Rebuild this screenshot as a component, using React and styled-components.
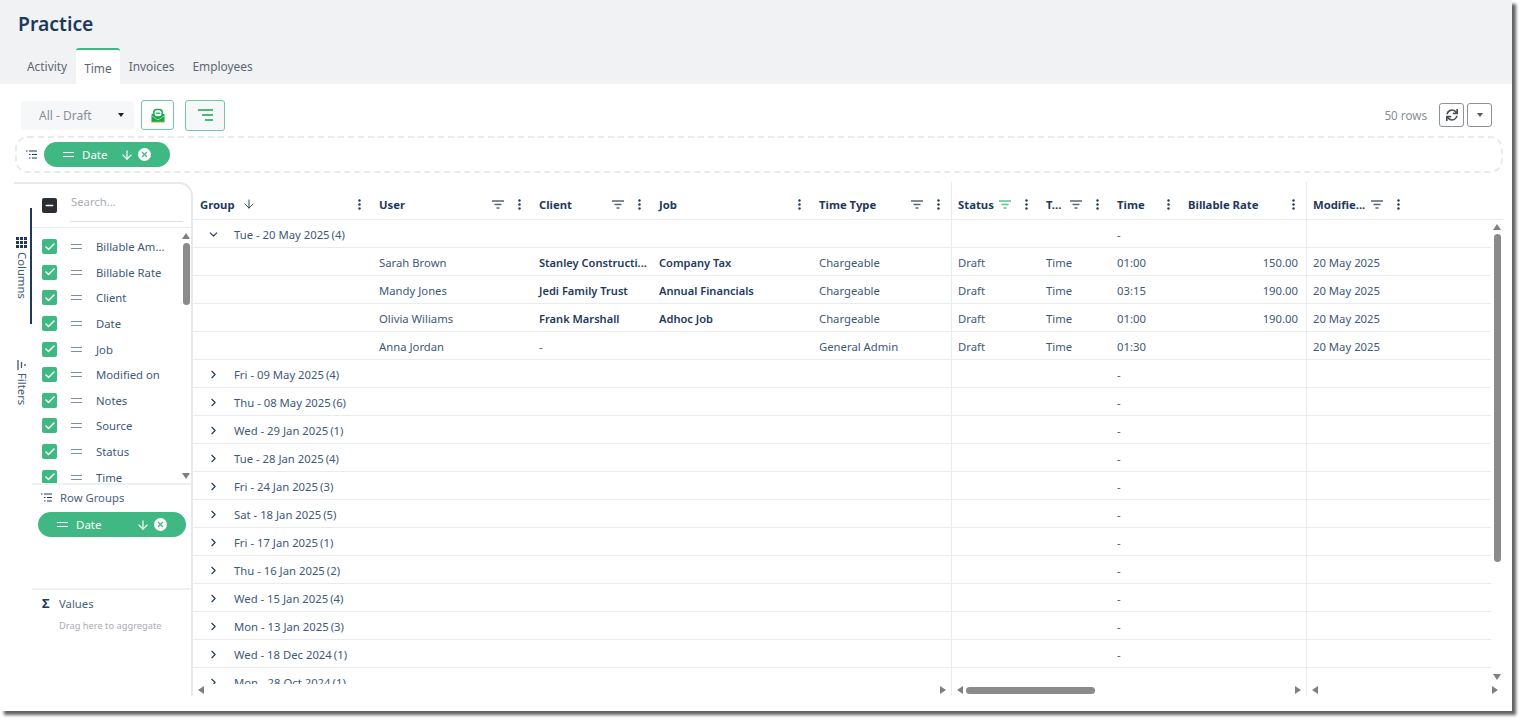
import React from "react";
import styled, { createGlobalStyle } from "styled-components";
import { ArrowDown, Check, ChevronDown, ChevronRight, Minus } from "lucide-react";
import { FaSync } from "react-icons/fa";

const GlobalStyle = createGlobalStyle`
  html, body { margin: 0; padding: 0; background: #fff; overflow: hidden; }
  body { font-family: "Noto Sans", "Open Sans", sans-serif; font-size: 11.3px; color: #35506f; }
  * { box-sizing: border-box; }
`;

const COLS = "179px 160px 120px 160px 139px 88px 71px 71px 125px 105px 80px";
const GREEN = "#40b883";
const NAVY = "#1d3a5c";
const LINE = "#e9ebee";

const Screen = styled.div`
  width: 1524px;
  height: 723px;
`;

const Page = styled.div`
  width: 1512px;
  height: 711px;
  background: #fff;
  display: flex;
  flex-direction: column;
  box-shadow: 4px 4px 3px rgba(70, 70, 70, 0.85);
  overflow: hidden;
`;

const Header = styled.header`
  height: 84px;
  flex: none;
  background: #f1f2f4;
  padding: 11px 18px 0;
  display: flex;
  flex-direction: column;
`;

const Title = styled.h1`
  margin: 0;
  font-size: 19.4px;
  line-height: 26px;
  font-weight: 600;
  color: ${NAVY};
`;

const Tabs = styled.nav`
  display: flex;
  margin-top: 11px;
  height: 36px;
`;

const Tab = styled.div`
  padding: ${(p) => (p.$active ? "8px 8px 0" : "6px 9px 0")};
  font-size: 11.9px;
  line-height: 20px;
  color: #5c6672;
  background: ${(p) => (p.$active ? "#fff" : "transparent")};
  border-top: 2px solid ${(p) => (p.$active ? GREEN : "transparent")};
  border-radius: 3px 3px 0 0;
`;

const Toolbar = styled.div`
  height: 30px;
  flex: none;
  margin: 16px 20px 0 21px;
  display: flex;
  align-items: center;
`;

const Select = styled.div`
  width: 113px;
  height: 29px;
  background: #f6f7f8;
  border-radius: 4px;
  padding: 0 10px 0 18px;
  display: flex;
  align-items: center;
  justify-content: space-between;
  color: #8a8f96;
  font-size: 12px;
`;

const Caret = styled.span`
  width: 0;
  height: 0;
  border-left: 3.5px solid transparent;
  border-right: 3.5px solid transparent;
  border-top: 4px solid ${(p) => p.$color || "#222"};
`;

const IconButton = styled.button`
  width: ${(p) => p.$w}px;
  height: ${(p) => p.$h}px;
  margin-left: ${(p) => p.$ml}px;
  border: 1.5px solid #74c9a2;
  border-radius: 3px;
  background: ${(p) => p.$bg || "#fff"};
  padding: 0;
  display: flex;
  align-items: center;
  justify-content: center;
`;

const RowCount = styled.span`
  margin-left: auto;
  margin-right: 12px;
  color: #8a8f96;
  font-size: 11.7px;
`;

const GreyButton = styled.button`
  width: 25px;
  height: 24px;
  margin-left: ${(p) => p.$ml || 0}px;
  border: 1px solid #8d9298;
  border-radius: 3px;
  background: #fff;
  padding: 0;
  display: flex;
  align-items: center;
  justify-content: center;
  color: #4a4f55;
`;

const DropZone = styled.div`
  height: 37px;
  flex: none;
  margin: 6px 9px 0 15px;
  border: 2px dashed #e8eaed;
  border-radius: 13px;
  display: flex;
  align-items: center;
  padding-left: 9px;
  gap: 7px;
`;

const Chip = styled.div`
  height: 25px;
  width: ${(p) => p.$w}px;
  background: ${GREEN};
  color: #fff;
  border-radius: 13px;
  display: flex;
  align-items: center;
  padding: 0 19px 0 19px;
  font-size: 11.5px;
`;

const ChipLabel = styled.span`
  margin-left: 8px;
  margin-right: auto;
`;

const ChipClose = styled.span`
  width: 13px;
  height: 13px;
  margin-left: 4px;
  border-radius: 50%;
  background: #fff;
  color: ${GREEN};
  display: flex;
  align-items: center;
  justify-content: center;
`;

const Workspace = styled.div`
  display: flex;
  height: 514px;
  margin-top: 9px;
  width: 1503px;
`;

const SideBar = styled.aside`
  width: 179px;
  margin-left: 14px;
  flex: none;
  display: flex;
  border-top: 2px solid #e6e9ed;
  border-right: 2px solid #e6e9ed;
  border-top-right-radius: 14px;
`;

const Rail = styled.div`
  width: 18px;
  flex: none;
  padding-top: 24px;
`;

const RailTab = styled.div`
  height: ${(p) => p.$h}px;
  margin-top: ${(p) => p.$mt || 0}px;
  border-right: 2px solid ${(p) => (p.$active ? NAVY : "transparent")};
  display: flex;
  flex-direction: column;
  align-items: center;
  padding-top: ${(p) => p.$pt}px;
  padding-right: 1px;
  gap: ${(p) => p.$gap}px;
  color: #3d5876;
`;

const RailLabel = styled.span`
  writing-mode: vertical-rl;
  font-size: 11.3px;
  line-height: 14px;
`;

const Panel = styled.div`
  flex: 1;
  min-width: 0;
  display: flex;
  flex-direction: column;
`;

const PanelTop = styled.div`
  height: 44px;
  flex: none;
  border-bottom: 1px solid ${LINE};
  display: flex;
  align-items: flex-start;
  padding: 14px 8px 0 10px;
`;

const MixedBox = styled.span`
  width: 15px;
  height: 15px;
  flex: none;
  border-radius: 2px;
  background: #2b2f33;
  color: #fff;
  display: flex;
  align-items: center;
  justify-content: center;
`;

const Search = styled.div`
  margin-left: 13px;
  margin-top: -7px;
  flex: 1;
  height: 31px;
  line-height: 22px;
  padding-left: 1px;
  border-bottom: 1px solid #dfe2e6;
  color: #a9adb3;
  font-size: 11.3px;
`;

const ColumnList = styled.div`
  height: 255px;
  flex: none;
  position: relative;
  overflow: hidden;
  padding: 6px 0 0 10px;
`;

const ColumnRow = styled.div`
  height: 25.6px;
  display: flex;
  align-items: center;
  font-size: 11.3px;
  color: #40597a;
`;

const CheckBox = styled.span`
  width: 15px;
  height: 15px;
  flex: none;
  background: ${GREEN};
  border-radius: 2px;
  color: #fff;
  display: flex;
  align-items: center;
  justify-content: center;
`;

const Grip = styled.span`
  width: 11px;
  height: 5px;
  margin: 0 14px 0 14px;
  flex: none;
  border-top: 1.5px solid ${(p) => p.$color || "#7d8ea3"};
  border-bottom: 1.5px solid ${(p) => p.$color || "#7d8ea3"};
`;

const ChipGrip = styled(Grip)`
  margin: 0;
`;

const ListThumb = styled.div`
  position: absolute;
  right: 1px;
  top: 15px;
  width: 7px;
  height: 62px;
  border-radius: 4px;
  background: #8b8b8b;
`;

const ArrowSlot = styled.span`
  position: absolute;
  right: 1px;
  ${(p) => (p.$bottom ? "bottom: 3px;" : "top: 4px;")}
  display: flex;
`;

const GroupsSection = styled.div`
  height: 105px;
  flex: none;
  border-top: 2px solid #eef0f2;
  padding: 3px 0 0 6px;
`;

const ValuesSection = styled.div`
  flex: 1;
  border-top: 2px solid #eef0f2;
  padding: 4px 0 0 10px;
`;

const SectionTitle = styled.div`
  display: flex;
  align-items: center;
  height: 18px;
  gap: 8px;
  color: #4a6280;
  font-size: 11.3px;
  margin-bottom: ${(p) => p.$mb || 0}px;
  padding-left: ${(p) => p.$pl || 0}px;
`;

const Hint = styled.div`
  font-size: 9.3px;
  color: #a9adb3;
  margin: 7px 0 0 17px;
`;

const Sigma = styled.span`
  font-size: 13px;
  font-weight: 700;
  width: 9px;
  color: ${NAVY};
`;

const Table = styled.section`
  flex: 1;
  min-width: 0;
  display: flex;
  flex-direction: column;
`;

const HeadRow = styled.div`
  height: 38px;
  flex: none;
  display: grid;
  grid-template-columns: ${COLS} 12px;
  border-bottom: 1px solid ${LINE};
`;

const HeadCell = styled.div`
  display: flex;
  align-items: center;
  padding: 7px 11px 0 ${(p) => (p.$split ? 6 : 7)}px;
  font-weight: 700;
  font-size: 11.3px;
  color: ${NAVY};
  border-left: ${(p) => (p.$split ? `1px solid ${LINE}` : "none")};
`;

const HeadTools = styled.span`
  margin-left: auto;
  display: flex;
  align-items: center;
  gap: 14px;
`;

const Body = styled.div`
  flex: 1;
  min-height: 0;
  display: flex;
`;

const Rows = styled.div`
  width: 1298px;
  overflow: hidden;
`;

const Row = styled.div`
  height: 28px;
  display: grid;
  grid-template-columns: ${COLS};
  border-bottom: 1px solid ${LINE};
`;

const Cell = styled.div`
  display: flex;
  align-items: center;
  white-space: nowrap;
  overflow: hidden;
  padding: 1px ${(p) => (p.$right ? 8 : 7)}px 0 ${(p) => (p.$split ? 6 : 7)}px;
  font-size: ${(p) => (p.$strong ? 11.1 : 11.3)}px;
  color: ${(p) => (p.$strong ? NAVY : "#40597a")};
  font-weight: ${(p) => (p.$strong ? 600 : 400)};
  justify-content: ${(p) => (p.$right ? "flex-end" : "flex-start")};
  border-left: ${(p) => (p.$split ? `1px solid ${LINE}` : "none")};
`;

const GroupCell = styled(Cell)`
  padding-left: 14px;
  gap: 14px;
  overflow: visible;
`;

const Count = styled.span`
  margin-left: 2px;
`;

const VScroll = styled.div`
  width: 12px;
  flex: none;
  display: flex;
  flex-direction: column;
  align-items: center;
  padding-top: 3px;
`;

const VThumb = styled.div`
  width: 7px;
  height: 328px;
  margin-top: 3px;
  border-radius: 4px;
  background: #8b8b8b;
`;

const PushDown = styled.span`
  margin-top: auto;
  margin-bottom: 3px;
  display: flex;
`;

const HScrollBar = styled.div`
  height: 12px;
  flex: none;
  display: grid;
  grid-template-columns: 758px 355px 197px;
`;

const HSection = styled.div`
  display: flex;
  align-items: center;
  padding: 0 4px;
  border-left: ${(p) => (p.$split ? `1px solid ${LINE}` : "none")};
`;

const HThumb = styled.div`
  width: 129px;
  height: 7px;
  margin-left: 2px;
  border-radius: 4px;
  background: #8b8b8b;
`;

const EndArrow = styled.span`
  margin-left: auto;
  display: flex;
`;

const Triangle = ({ dir }) => {
  const rot = { up: 0, right: 90, down: 180, left: 270 }[dir];
  return (
    <svg width="8" height="8" viewBox="0 0 8 8" style={{ transform: `rotate(${rot}deg)` }}>
      <polygon points="4,1 8,7 0,7" fill="#7f7f7f" />
    </svg>
  );
};

const Kebab = () => (
  <svg width="3" height="11" viewBox="0 0 3 11" fill={NAVY}>
    <circle cx="1.5" cy="1.5" r="1.2" />
    <circle cx="1.5" cy="5.5" r="1.2" />
    <circle cx="1.5" cy="9.5" r="1.2" />
  </svg>
);

const FilterIcon = ({ color = "#56657a" }) => (
  <svg width="12" height="9" viewBox="0 0 12 9" stroke={color} strokeWidth="1.5">
    <path d="M0 1h12M2.5 4.5h7M4.5 8h3" />
  </svg>
);

const GroupsIcon = () => (
  <svg width="11" height="9" viewBox="0 0 11 9" stroke={NAVY} strokeWidth="1.2">
    <path d="M0 1h1.5M3 1h8M3 4.5h1.5M6 4.5h5M3 8h1.5M6 8h5" />
  </svg>
);

const GridIcon = () => (
  <svg width="11" height="11" viewBox="0 0 11 11" fill={NAVY}>
    {[0, 4, 8].flatMap((y) =>
      [0, 4, 8].map((x) => <rect key={`${x}-${y}`} x={x} y={y} width="3" height="3" />)
    )}
  </svg>
);

const MailIcon = () => (
  <svg width="14" height="15" viewBox="0 0 14 15">
    <path d="M0.5 6.5L7 3l6.5 3.5V14H0.5z" fill="#12a84c" />
    <path d="M0.5 14h13" stroke="#c9a227" strokeWidth="1" />
    <path d="M1 8l6 4 6-4" fill="none" stroke="#8fdcae" strokeWidth="1" />
    <rect x="2.8" y="1.5" width="8.4" height="7.5" rx="3" fill="#fff" stroke="#12a84c" strokeWidth="1.5" />
    <path d="M4.8 5.2h4.4" stroke="#12a84c" strokeWidth="1.2" />
  </svg>
);

const LinesIcon = () => (
  <svg width="15" height="12" viewBox="0 0 15 12" stroke="#12a84c" strokeWidth="1.6">
    <path d="M0 1h15M4 6h11M7 11h8" />
  </svg>
);

const FiltersIcon = () => (
  <svg width="9" height="10" viewBox="0 0 9 10" stroke="#3d5876" strokeWidth="1.3">
    <path d="M1 0v10M4.5 2v6M8 4v2" />
  </svg>
);

const CloseMark = () => (
  <svg width="7" height="7" viewBox="0 0 7 7" stroke={GREEN} strokeWidth="1.2">
    <path d="M1 1l5 5M6 1L1 6" />
  </svg>
);

const DateChip = ({ w }) => (
  <Chip $w={w}>
    <ChipGrip $color="#fff" />
    <ChipLabel>Date</ChipLabel>
    <ArrowDown size={14} strokeWidth={2} />
    <ChipClose>
      <CloseMark />
    </ChipClose>
  </Chip>
);

const columnNames = [
  "Billable Am...",
  "Billable Rate",
  "Client",
  "Date",
  "Job",
  "Modified on",
  "Notes",
  "Source",
  "Status",
  "Time",
];

const headers = [
  { label: "Group", sort: true },
  { label: "User", filter: true },
  { label: "Client", filter: true },
  { label: "Job" },
  { label: "Time Type", filter: true },
  { label: "Status", filter: true, active: true, split: true },
  { label: "T...", filter: true },
  { label: "Time" },
  { label: "Billable Rate" },
  { label: "Modifie...", filter: true, split: true },
];

const details = [
  ["Sarah Brown", "Stanley Constructi...", "Company Tax", "Chargeable", "01:00", "150.00"],
  ["Mandy Jones", "Jedi Family Trust", "Annual Financials", "Chargeable", "03:15", "190.00"],
  ["Olivia Wiliams", "Frank Marshall", "Adhoc Job", "Chargeable", "01:00", "190.00"],
  ["Anna Jordan", "-", "", "General Admin", "01:30", ""],
];

const groups = [
  ["Fri - 09 May 2025", 4],
  ["Thu - 08 May 2025", 6],
  ["Wed - 29 Jan 2025", 1],
  ["Tue - 28 Jan 2025", 4],
  ["Fri - 24 Jan 2025", 3],
  ["Sat - 18 Jan 2025", 5],
  ["Fri - 17 Jan 2025", 1],
  ["Thu - 16 Jan 2025", 2],
  ["Wed - 15 Jan 2025", 4],
  ["Mon - 13 Jan 2025", 3],
  ["Wed - 18 Dec 2024", 1],
  ["Mon - 28 Oct 2024", 1],
];

const GroupRow = ({ label, count, open }) => (
  <Row>
    <GroupCell style={{ gridColumn: "1 / span 5" }}>
      {open ? <ChevronDown size={13} color={NAVY} /> : <ChevronRight size={13} color={NAVY} />}
      <span>
        {label}
        <Count>({count})</Count>
      </span>
    </GroupCell>
    <Cell $split />
    <Cell />
    <Cell>-</Cell>
    <Cell />
    <Cell $split />
    <Cell />
  </Row>
);

const DetailRow = ({ data }) => (
  <Row>
    <Cell />
    <Cell>{data[0]}</Cell>
    <Cell $strong={data[1] !== "-"}>{data[1]}</Cell>
    <Cell $strong>{data[2]}</Cell>
    <Cell>{data[3]}</Cell>
    <Cell $split>Draft</Cell>
    <Cell>Time</Cell>
    <Cell>{data[4]}</Cell>
    <Cell $right>{data[5]}</Cell>
    <Cell $split>20 May 2025</Cell>
    <Cell />
  </Row>
);

export default function App() {
  return (
    <Screen>
      <GlobalStyle />
      <Page>
        <Header>
          <Title>Practice</Title>
          <Tabs>
            <Tab>Activity</Tab>
            <Tab $active>Time</Tab>
            <Tab>Invoices</Tab>
            <Tab>Employees</Tab>
          </Tabs>
        </Header>

        <Toolbar>
          <Select>
            All - Draft
            <Caret />
          </Select>
          <IconButton $w={33} $h={30} $ml={7}>
            <MailIcon />
          </IconButton>
          <IconButton $w={40} $h={31} $ml={11} $bg="#f6f7f8">
            <LinesIcon />
          </IconButton>
          <RowCount>50 rows</RowCount>
          <GreyButton>
            <FaSync size={12} />
          </GreyButton>
          <GreyButton $ml={3}>
            <Caret $color="#555" />
          </GreyButton>
        </Toolbar>

        <DropZone>
          <GroupsIcon />
          <DateChip w={126} />
        </DropZone>

        <Workspace>
          <SideBar>
            <Rail>
              <RailTab $active $h={116} $pt={29} $gap={4}>
                <GridIcon />
                <RailLabel>Columns</RailLabel>
              </RailTab>
              <RailTab $h={60} $mt={26} $pt={10} $gap={3}>
                <FiltersIcon />
                <RailLabel>Filters</RailLabel>
              </RailTab>
            </Rail>
            <Panel>
              <PanelTop>
                <MixedBox>
                  <Minus size={11} strokeWidth={3} />
                </MixedBox>
                <Search>Search...</Search>
              </PanelTop>
              <ColumnList>
                {columnNames.map((name) => (
                  <ColumnRow key={name}>
                    <CheckBox>
                      <Check size={12} strokeWidth={3} />
                    </CheckBox>
                    <Grip />
                    {name}
                  </ColumnRow>
                ))}
                <ArrowSlot>
                  <Triangle dir="up" />
                </ArrowSlot>
                <ListThumb />
                <ArrowSlot $bottom>
                  <Triangle dir="down" />
                </ArrowSlot>
              </ColumnList>
              <GroupsSection>
                <SectionTitle $mb={6} $pl={3}>
                  <GroupsIcon />
                  Row Groups
                </SectionTitle>
                <DateChip w={148} />
              </GroupsSection>
              <ValuesSection>
                <SectionTitle>
                  <Sigma>Σ</Sigma>
                  Values
                </SectionTitle>
                <Hint>Drag here to aggregate</Hint>
              </ValuesSection>
            </Panel>
          </SideBar>

          <Table>
            <HeadRow>
              {headers.map((h) => (
                <HeadCell key={h.label} $split={h.split}>
                  {h.label}
                  {h.sort && <ArrowDown size={14} strokeWidth={1.6} style={{ marginLeft: 7 }} />}
                  <HeadTools>
                    {h.filter && <FilterIcon color={h.active ? "#58c48f" : undefined} />}
                    <Kebab />
                  </HeadTools>
                </HeadCell>
              ))}
              <HeadCell />
              <HeadCell />
            </HeadRow>
            <Body>
              <Rows>
                <GroupRow label="Tue - 20 May 2025" count={4} open />
                {details.map((d) => (
                  <DetailRow key={d[0]} data={d} />
                ))}
                {groups.map(([label, count]) => (
                  <GroupRow key={label} label={label} count={count} />
                ))}
              </Rows>
              <VScroll>
                <Triangle dir="up" />
                <VThumb />
                <PushDown>
                  <Triangle dir="down" />
                </PushDown>
              </VScroll>
            </Body>
            <HScrollBar>
              <HSection>
                <Triangle dir="left" />
                <EndArrow>
                  <Triangle dir="right" />
                </EndArrow>
              </HSection>
              <HSection $split>
                <Triangle dir="left" />
                <HThumb />
                <EndArrow>
                  <Triangle dir="right" />
                </EndArrow>
              </HSection>
              <HSection $split>
                <Triangle dir="left" />
                <EndArrow>
                  <Triangle dir="right" />
                </EndArrow>
              </HSection>
            </HScrollBar>
          </Table>
        </Workspace>
      </Page>
    </Screen>
  );
}
